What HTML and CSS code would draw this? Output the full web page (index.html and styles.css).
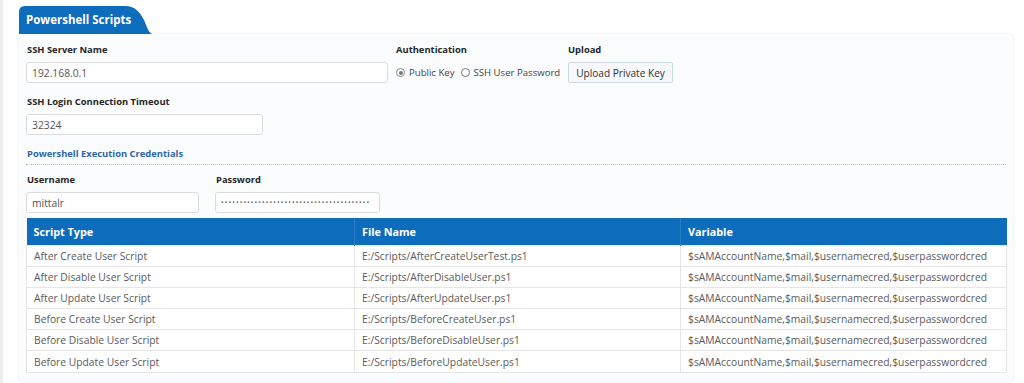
FILE: index.html
```html
<!DOCTYPE html>
<html>
<head>
<meta charset="utf-8">
<link rel="stylesheet" href="styles.css">
</head>
<body>
<div class="page">
  <div class="tab">Powershell Scripts</div>
  <div class="card">
    <div class="row">
      <div class="field f-server">
        <div class="label">SSH Server Name</div>
        <input class="input" type="text" value="192.168.0.1">
      </div>
      <div class="field f-auth">
        <div class="label">Authentication</div>
        <div class="radios">
          <span class="radio on"></span><span class="rlabel">Public Key</span>
          <span class="radio"></span><span class="rlabel">SSH User Password</span>
        </div>
      </div>
      <div class="field f-upload">
        <div class="label">Upload</div>
        <button class="btn">Upload Private Key</button>
      </div>
    </div>
    <div class="row">
      <div class="field f-timeout">
        <div class="label">SSH Login Connection Timeout</div>
        <input class="input" type="text" value="32324">
      </div>
    </div>
    <div class="section">Powershell Execution Credentials</div>
    <div class="row">
      <div class="field f-user">
        <div class="label">Username</div>
        <input class="input" type="text" value="mittalr">
      </div>
      <div class="field f-pass">
        <div class="label">Password</div>
        <div class="input dots">••••••••••••••••••••••••••••••••••••••••</div>
      </div>
    </div>
    <table class="grid">
      <colgroup><col class="c1"><col class="c2"><col class="c3"></colgroup>
      <thead>
        <tr><th>Script Type</th><th>File Name</th><th>Variable</th></tr>
      </thead>
      <tbody>
        <tr><td>After Create User Script</td><td>E:/Scripts/AfterCreateUserTest.ps1</td><td>$sAMAccountName,$mail,$usernamecred,$userpasswordcred</td></tr>
        <tr><td>After Disable User Script</td><td>E:/Scripts/AfterDisableUser.ps1</td><td>$sAMAccountName,$mail,$usernamecred,$userpasswordcred</td></tr>
        <tr><td>After Update User Script</td><td>E:/Scripts/AfterUpdateUser.ps1</td><td>$sAMAccountName,$mail,$usernamecred,$userpasswordcred</td></tr>
        <tr><td>Before Create User Script</td><td>E:/Scripts/BeforeCreateUser.ps1</td><td>$sAMAccountName,$mail,$usernamecred,$userpasswordcred</td></tr>
        <tr><td>Before Disable User Script</td><td>E:/Scripts/BeforeDisableUser.ps1</td><td>$sAMAccountName,$mail,$usernamecred,$userpasswordcred</td></tr>
        <tr><td>Before Update User Script</td><td>E:/Scripts/BeforeUpdateUser.ps1</td><td>$sAMAccountName,$mail,$usernamecred,$userpasswordcred</td></tr>
      </tbody>
    </table>
  </div>
</div>
</body>
</html>
```

FILE: styles.css
```css
* { box-sizing: border-box; }
html, body { margin: 0; padding: 0; background: #fff; }
body {
  font-family: "Open Sans", "Liberation Sans", sans-serif;
  font-size: 10px;
  color: #333;
  border-left: 3px solid #efefef;
  height: 383px;
  overflow: hidden;
}
.page { padding: 6px 11px 0 16px; }
.tab {
  width: 133px;
  height: 28px;
  background: #0e6cbd;
  color: #fff;
  font-weight: 700;
  font-size: 11.5px;
  line-height: 28px;
  padding-left: 7px;
  clip-path: path('M0 28 L0 6 Q0 0 6 0 L106 0 C117 0 121 7 125 14 C128 21 130 28 134 28 Z');
}
.card {
  background: #fbfcfe;
  border-radius: 0 4px 4px 4px;
  box-shadow: 0 0 3px rgba(0,0,0,0.10);
  padding: 8px 7px 9px 7px;
  height: 347px;
}
.row { display: flex; margin-bottom: 11px; }
.field { display: flex; flex-direction: column; flex-shrink: 0; }
.label {
  font-weight: 700;
  font-size: 9.4px;
  line-height: 15px;
  color: #262626;
  margin-bottom: 5px;
  padding-left: 1px;
  white-space: nowrap;
}
.input {
  height: 21px;
  border: 1px solid #dcdcdc;
  border-radius: 3px;
  background: #fff;
  font-family: inherit;
  font-size: 10.3px;
  color: #555;
  padding: 0 5px;
  outline: none;
}
.f-server { width: 362px; margin-right: 7px; }
.f-auth { width: 172px; }
.f-timeout { width: 237px; }
.f-user { width: 173px; margin-right: 16px; }
.f-pass { width: 165px; }
.radios { display: flex; align-items: center; height: 21px; padding-left: 1px; white-space: nowrap; }
.radio {
  flex-shrink: 0;
  width: 9px; height: 9px;
  border: 1px solid #777;
  border-radius: 50%;
  background: #fff;
  margin-right: 4px;
  position: relative;
}
.radio.on { border-color: #888; }
.radio.on::after {
  content: "";
  position: absolute;
  left: 1.5px; top: 1.5px;
  width: 4px; height: 4px;
  border-radius: 50%;
  background: #777;
}
.rlabel { font-size: 9.6px; color: #444; margin-right: 6px; white-space: nowrap; }
.btn {
  height: 21px;
  width: 105px;
  border: 1px solid #cfd6e4;
  border-radius: 2px;
  background: #f7f8fc;
  font-family: inherit;
  font-size: 10.1px;
  color: #333;
  padding: 0;
  margin-left: 1px;
}
.section {
  font-weight: 700;
  font-size: 9.4px;
  line-height: 15px;
  color: #2f66a3;
  padding: 0 0 3px 1px;
  border-bottom: 1px dotted #bbb;
  margin-top: 0;
  margin-bottom: 7px;
}
.dots {
  display: flex;
  align-items: center;
  font-size: 7px;
  letter-spacing: 1.1px;
  color: #666;
  overflow: hidden;
  white-space: nowrap;
}
.grid {
  width: 100%;
  border-collapse: collapse;
  table-layout: fixed;
  margin-top: -6px;
}
.c1 { width: 328px; }
.c2 { width: 326px; }
.c3 { width: 326px; }
.grid th {
  background: #0e6cbd;
  color: #fff;
  font-weight: 700;
  font-size: 10.8px;
  text-align: left;
  height: 27px;
  padding: 0 7px;
  border-right: 1px solid #2a7cc4;
}
.grid th:last-child { border-right: none; }
.grid td {
  height: 21.2px;
  padding: 0 7px;
  font-size: 10.3px;
  color: #5a5a5a;
  background: #fff;
  border: 1px solid #e6e6e6;
  white-space: nowrap;
  overflow: hidden;
}
```
